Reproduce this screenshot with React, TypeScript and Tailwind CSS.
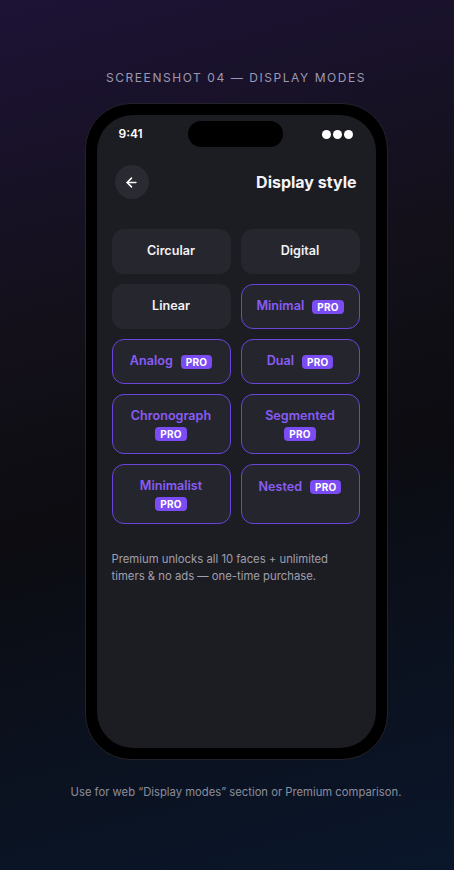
import { ArrowLeft } from "lucide-react";

type Face = { name: string; pro?: boolean; stack?: boolean; lift?: boolean };

const ROWS: { h: string; faces: Face[] }[] = [
  { h: "h-[45px]", faces: [{ name: "Circular" }, { name: "Digital" }] },
  { h: "h-[45px]", faces: [{ name: "Linear" }, { name: "Minimal", pro: true }] },
  { h: "h-[45px]", faces: [{ name: "Analog", pro: true }, { name: "Dual", pro: true }] },
  {
    h: "h-[60px]",
    faces: [
      { name: "Chronograph", pro: true, stack: true },
      { name: "Segmented", pro: true, stack: true },
    ],
  },
  {
    h: "h-[60px]",
    faces: [
      { name: "Minimalist", pro: true, stack: true },
      { name: "Nested", pro: true, lift: true },
    ],
  },
];

function ProBadge() {
  return (
    <span className="rounded-[4px] bg-[#7b4cf4] px-[5px] py-px text-[10px] font-bold leading-[12px] tracking-[0.02em] text-white">
      PRO
    </span>
  );
}

function FaceCard({ face, h }: { face: Face; h: string }) {
  if (!face.pro) {
    return (
      <div className={`flex ${h} items-center justify-center rounded-xl bg-[#26262e]`}>
        <span className="text-[12.6px] font-semibold text-[#f2f2f5]">{face.name}</span>
      </div>
    );
  }

  return (
    <div
      className={`flex ${h} items-center justify-center rounded-xl border-[1.5px] border-[#6a45dc] bg-[#25252d] ${
        face.stack ? "flex-col gap-[1px]" : "gap-2"
      } ${face.lift ? "pb-[14px]" : ""}`}
    >
      <span className="text-[12.6px] font-semibold text-[#8a5cf6]">{face.name}</span>
      <ProBadge />
    </div>
  );
}

export default function App() {
  return (
    <div
      className="flex min-h-[870px] w-full flex-col items-center bg-[linear-gradient(165deg,#1d1336_0%,#131019_35%,#0c0c11_55%,#0b1220_80%,#0a162b_100%)] pl-[18px] pt-[70px]"
      style={{ fontFamily: "Inter, 'Noto Sans', sans-serif" }}
    >
      <p className="text-[12px] leading-4 tracking-[0.13em] text-[#9c99b3]">
        SCREENSHOT 04 — DISPLAY MODES
      </p>

      <div className="mt-[17px] rounded-[46px] border border-[#23232b] bg-black p-[11px]">
        <div className="flex h-[633px] w-[279px] flex-col overflow-hidden rounded-[36px] bg-[#1c1c23]">
          {/* status bar */}
          <div className="mt-[6px] flex h-[26px] items-center justify-between pl-[22px] pr-[23px]">
            <span className="w-[40px] text-[12px] font-semibold text-white">9:41</span>
            <div className="h-[26px] w-[95px] rounded-full bg-black" />
            <div className="flex w-[40px] justify-end gap-[2px]">
              <span className="h-[9px] w-[9px] rounded-full bg-white" />
              <span className="h-[9px] w-[9px] rounded-full bg-white" />
              <span className="h-[9px] w-[9px] rounded-full bg-white" />
            </div>
          </div>

          {/* header */}
          <div className="mt-[18px] flex items-center justify-between pl-[18px] pr-[19px]">
            <button
              type="button"
              className="flex h-[34px] w-[34px] items-center justify-center rounded-full bg-[#2a2a32] text-white"
            >
              <ArrowLeft size={15} strokeWidth={2.5} />
            </button>
            <h1 className="text-[16px] font-bold text-[#f4f4f7]">Display style</h1>
          </div>

          {/* faces */}
          <div className="mt-[30px] flex flex-col gap-[10px] pl-[15px] pr-[16px]">
            {ROWS.map((row, i) => (
              <div key={i} className="grid grid-cols-2 gap-[10px]">
                {row.faces.map((face) => (
                  <FaceCard key={face.name} face={face} h={row.h} />
                ))}
              </div>
            ))}
          </div>

          <p className="mt-[27px] pl-[15px] pr-[16px] text-[11.3px] leading-[17px] text-[#a09fab]">
            Premium unlocks all 10 faces + unlimited timers &amp; no ads — one-time purchase.
          </p>
        </div>
      </div>

      <p className="mt-[24px] text-[11.25px] text-[#8d8e9c]">
        Use for web “Display modes” section or Premium comparison.
      </p>
    </div>
  );
}
